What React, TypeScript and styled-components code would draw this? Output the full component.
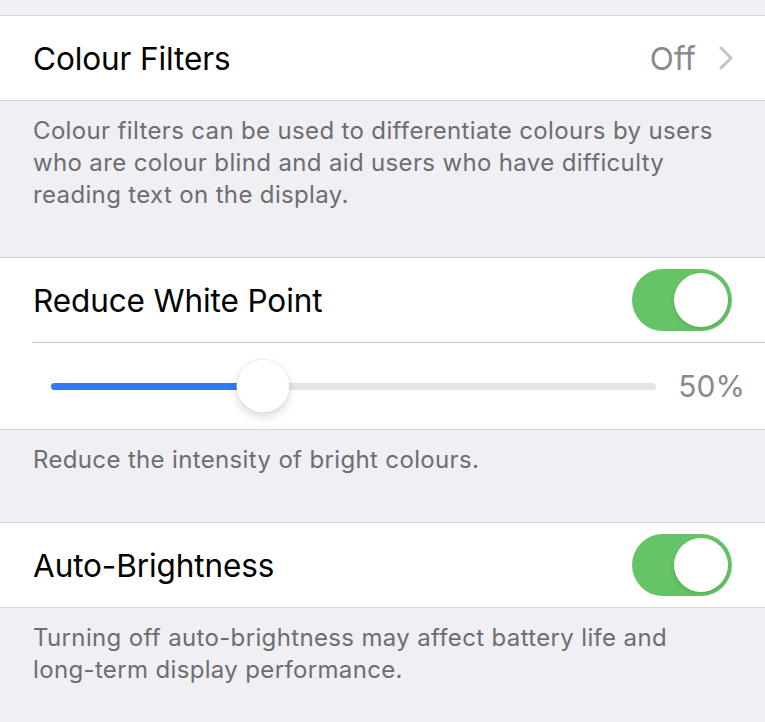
import React from "react";
import styled, { createGlobalStyle } from "styled-components";

const GlobalStyle = createGlobalStyle`
  html, body {
    margin: 0;
    padding: 0;
    background: #efeff4;
    font-family: Inter, "Noto Sans", "Liberation Sans", sans-serif;
    -webkit-font-smoothing: antialiased;
  }
`;

type SettingItem = {
  title: string;
  detail?: string;
  toggle?: boolean;
  slider?: number;
  footer: string;
};

const items: SettingItem[] = [
  {
    title: "Colour Filters",
    detail: "Off",
    footer:
      "Colour filters can be used to differentiate colours by users who are colour blind and aid users who have difficulty reading text on the display.",
  },
  {
    title: "Reduce White Point",
    toggle: true,
    slider: 50,
    footer: "Reduce the intensity of bright colours.",
  },
  {
    title: "Auto-Brightness",
    toggle: true,
    footer:
      "Turning off auto-brightness may affect battery life and long-term display performance.",
  },
];

const Chevron = () => (
  <svg width="14" height="24" viewBox="0 0 14 24" fill="none">
    <path
      d="M2 2 L12 12 L2 22"
      stroke="#c4c4c7"
      strokeWidth="3"
      strokeLinecap="round"
      strokeLinejoin="round"
    />
  </svg>
);

const Toggle = ({ on }: { on: boolean }) => (
  <SToggle $on={on}>
    <SKnob />
  </SToggle>
);

const Slider = ({ value }: { value: number }) => (
  <SSliderRow>
    <STrack>
      {/* 塗りの幅は値から計算 */}
      <SFill style={{ width: `${value * 0.7}%` }} />
      <SThumb style={{ left: `${value * 0.7}%` }} />
    </STrack>
    <SValue>{value}%</SValue>
  </SSliderRow>
);

export default function App() {
  return (
    <>
      <GlobalStyle />
      <SPage>
        {items.map(({ title, detail, toggle, slider, footer }) => (
          <section key={title}>
            <SGroup>
              <SRow>
                <STitle>{title}</STitle>
                {detail && (
                  <SAccessory>
                    <SDetail>{detail}</SDetail>
                    <Chevron />
                  </SAccessory>
                )}
                {toggle !== undefined && <Toggle on={toggle} />}
              </SRow>
              {slider !== undefined && (
                <>
                  <SSeparator />
                  <Slider value={slider} />
                </>
              )}
            </SGroup>
            <SFooter>{footer}</SFooter>
          </section>
        ))}
      </SPage>
    </>
  );
}

const SPage = styled.main`
  padding-top: 15px;
  min-height: 722px;
  box-sizing: border-box;
`;

const SGroup = styled.div`
  background: #ffffff;
  border-top: 1px solid #d6d6da;
  border-bottom: 1px solid #d6d6da;
`;

const SRow = styled.div`
  height: 84px;
  display: flex;
  align-items: center;
  justify-content: space-between;
  padding: 0 32px 0 33px;
`;

const STitle = styled.span`
  font-size: 31.5px;
  color: #000000;
  letter-spacing: -0.1px;
`;

const SAccessory = styled.div`
  display: flex;
  align-items: center;
  gap: 23px;
`;

const SDetail = styled.span`
  font-size: 31.5px;
  color: #8a8a8e;
`;

const SToggle = styled.div<{ $on: boolean }>`
  width: 100px;
  height: 62px;
  border-radius: 31px;
  box-sizing: border-box;
  padding: 4px;
  display: flex;
  justify-content: ${({ $on }) => ($on ? "flex-end" : "flex-start")};
  align-items: center;
  background: ${({ $on }) => ($on ? "#65c466" : "#e9e9ea")};
  margin-right: 1px;
`;

const SKnob = styled.div`
  width: 54px;
  height: 54px;
  border-radius: 50%;
  background: #ffffff;
  box-shadow: 0 2px 4px rgba(0, 0, 0, 0.12);
`;

const SSeparator = styled.div`
  height: 1px;
  margin-left: 32px;
  background: #c8c7cc;
`;

const SSliderRow = styled.div`
  height: 86px;
  display: flex;
  align-items: center;
  gap: 22px;
  padding: 0 20px 0 51px;
`;

const STrack = styled.div`
  position: relative;
  flex: 1;
  height: 7px;
  border-radius: 4px;
  background: #e5e5ea;
`;

const SFill = styled.div`
  height: 100%;
  border-radius: 4px;
  background: #3478f6;
`;

const SThumb = styled.div`
  position: absolute;
  top: 50%;
  width: 53px;
  height: 53px;
  border-radius: 50%;
  background: #ffffff;
  transform: translate(-50%, -50%);
  box-shadow: 0 4px 10px rgba(0, 0, 0, 0.15), 0 0 1px rgba(0, 0, 0, 0.2);
`;

const SValue = styled.span`
  font-size: 30px;
  color: #8a8a8e;
`;

const SFooter = styled.p`
  margin: 0;
  padding: 14px 36px 46px 33px;
  font-size: 24px;
  letter-spacing: 0.35px;
  line-height: 32px;
  color: #6d6d72;
`;
